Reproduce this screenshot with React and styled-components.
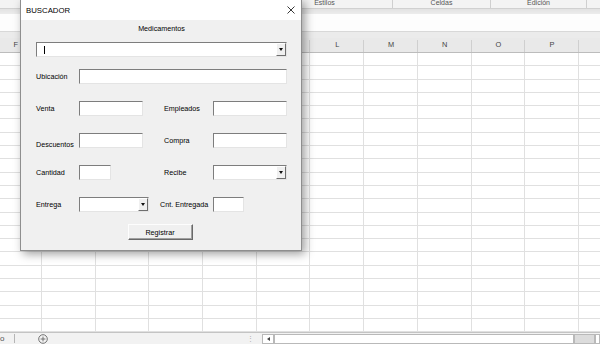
import React from "react";
import styled, { createGlobalStyle } from "styled-components";

const GlobalStyle = createGlobalStyle`
  body {
    margin: 0;
    overflow: hidden;
    font-family: "Liberation Sans", Arial, sans-serif;
  }
`;

const COLS = ["F", "G", "H", "I", "J", "K", "L", "M", "N", "O", "P", ""];
const GRID_COLS = "42px repeat(11, 53.7px)";

const Screen = styled.div`
  position: relative;
  width: 600px;
  height: 344px;
  overflow: hidden;
  background: #fff;
  display: flex;
  flex-direction: column;
`;

const RibbonLabels = styled.div`
  display: flex;
  height: 8px;
  background: #f3f3f3;
`;

const RibbonGroup = styled.div`
  width: ${(p) => p.$w}px;
  flex: none;
  border-right: 1px solid #cfcfcf;
  font-size: 7px;
  line-height: 6px;
  color: #555;
  text-align: center;
  overflow: hidden;
`;

const RibbonBand = styled.div`
  height: 6px;
  border-top: 1px solid #d0d0d0;
  box-sizing: border-box;
  background: linear-gradient(#e2e2e2, #ececec);
`;

const FormulaBar = styled.div`
  height: 18px;
  background: #fdfdfd;
  box-sizing: border-box;
  border-bottom: 1px solid #d8d8d8;
`;

const HeaderGap = styled.div`
  height: 6px;
  background: #ebebeb;
`;

const HeaderRow = styled.div`
  display: grid;
  grid-template-columns: ${GRID_COLS};
  height: 15px;
  box-sizing: border-box;
  background: #e9e9e9;
  border-bottom: 1px solid #bcbcbc;
`;

const HeaderCell = styled.div`
  position: relative;
  font-size: 7.4px;
  line-height: 14px;
  color: #444;
  text-align: ${(p) => (p.$first ? "right" : "center")};
  padding-right: ${(p) => (p.$first ? 24 : 0)}px;
  &::after {
    content: "";
    position: absolute;
    right: 0;
    top: 2px;
    bottom: 0;
    width: 1px;
    background: #cfcfcf;
  }
`;

const SheetGrid = styled.div`
  flex: 1;
  display: grid;
  grid-template-columns: ${GRID_COLS};
  grid-auto-rows: 13.3px;
  overflow: hidden;
`;

const Cell = styled.div`
  box-sizing: border-box;
  border-right: 1px solid #e0e0e0;
  border-bottom: 1px solid #e0e0e0;
`;

const BottomBar = styled.div`
  height: 12px;
  flex: none;
  box-sizing: border-box;
  border-top: 1px solid #c4c4c4;
  background: #f2f2f2;
  display: flex;
  align-items: center;
  font-size: 8px;
  color: #555;
`;

const TabEnd = styled.span`
  width: 14px;
  line-height: 10px;
`;

const TabSep = styled.span`
  width: 1px;
  height: 9px;
  background: #b5b5b5;
  margin-right: 23px;
`;

const Dots = styled.span`
  margin-left: auto;
  margin-right: 8px;
  color: #aaa;
  font-size: 7px;
`;

const ScrollBox = styled.div`
  width: ${(p) => p.$w}px;
  height: 10px;
  box-sizing: border-box;
  border: 1px solid #b9b9b9;
  background: ${(p) => p.$bg || "#fff"};
  display: flex;
  align-items: center;
  justify-content: center;
  flex: none;
`;

const ArrowLeft = styled.span`
  width: 0;
  height: 0;
  border-top: 2.5px solid transparent;
  border-bottom: 2.5px solid transparent;
  border-right: 3px solid #444;
`;

/* dialog */

const Dialog = styled.div`
  position: absolute;
  left: 20px;
  top: -1px;
  width: 282px;
  box-sizing: border-box;
  border: 1px solid #8e8e8e;
  background: #f0f0f0;
  box-shadow: 3px 3px 9px rgba(0, 0, 0, 0.38);
`;

const TitleBar = styled.div`
  height: 20px;
  background: #fff;
  display: flex;
  align-items: center;
  justify-content: space-between;
  padding: 0 6px 0 5px;
  box-sizing: border-box;
`;

const Title = styled.span`
  font-size: 7.8px;
  color: #000;
`;

const Body = styled.div`
  padding: 4px 0 10px 15px;
  display: flex;
  flex-direction: column;
`;

const Caption = styled.div`
  height: 10px;
  line-height: 10px;
  width: 251px;
  text-align: center;
  font-size: 7.2px;
  color: #000;
`;

const FormRow = styled.div`
  display: grid;
  grid-template-columns: ${(p) => p.$cols || "43px 85px 49px 74px"};
  height: 15px;
  margin-top: ${(p) => p.$top}px;
`;

const Label = styled.span`
  align-self: center;
  font-size: 7.2px;
  color: #000;
  white-space: nowrap;
  margin-left: ${(p) => p.$shift || 0}px;
  transform: translateY(${(p) => p.$drop || 0}px);
`;

const TextBox = styled.div`
  width: ${(p) => (p.$w ? `${p.$w}px` : "100%")};
  height: 15px;
  box-sizing: border-box;
  background: #fff;
  border: 1px solid;
  border-color: #7d7d7d #e4e4e4 #e4e4e4 #7d7d7d;
  display: flex;
  align-items: stretch;
  justify-content: flex-end;
  position: relative;
`;

const Caret = styled.span`
  position: absolute;
  left: 7px;
  top: 3px;
  width: 1px;
  height: 8px;
  background: #000;
`;

const DropBtn = styled.div`
  width: 10px;
  box-sizing: border-box;
  background: #f0f0f0;
  border: 1px solid;
  border-color: #fff #6e6e6e #6e6e6e #fff;
  display: flex;
  align-items: center;
  justify-content: center;
`;

const DownTri = styled.span`
  width: 0;
  height: 0;
  border-left: 2.5px solid transparent;
  border-right: 2.5px solid transparent;
  border-top: 3px solid #111;
`;

const ButtonRow = styled.div`
  margin-top: 12px;
  width: 251px;
  display: flex;
  justify-content: center;
`;

const Button = styled.div`
  width: 65px;
  height: 16px;
  box-sizing: border-box;
  border: 1px solid;
  border-color: #fdfdfd #696969 #696969 #fdfdfd;
  box-shadow: inset -1px -1px 0 #a0a0a0;
  background: #f0f0f0;
  font-size: 7.2px;
  color: #000;
  display: flex;
  align-items: center;
  justify-content: center;
  margin-left: -3px;
`;

const Combo = ({ w, caret }) => (
  <TextBox $w={w}>
    {caret && <Caret />}
    <DropBtn>
      <DownTri />
    </DropBtn>
  </TextBox>
);

export default function App() {
  return (
    <>
      <GlobalStyle />
      <Screen>
        <RibbonLabels>
          <RibbonGroup $w={256} />
          <RibbonGroup $w={135}>Estilos</RibbonGroup>
          <RibbonGroup $w={97}>Celdas</RibbonGroup>
          <RibbonGroup $w={95}>Edición</RibbonGroup>
        </RibbonLabels>
        <RibbonBand />
        <FormulaBar />
        <HeaderGap />
        <HeaderRow>
          {COLS.map((c, i) => (
            <HeaderCell key={i} $first={i === 0}>
              {c}
            </HeaderCell>
          ))}
        </HeaderRow>
        <SheetGrid>
          {Array.from({ length: 22 * COLS.length }).map((_, i) => (
            <Cell key={i} />
          ))}
        </SheetGrid>
        <BottomBar>
          <TabEnd>o</TabEnd>
          <TabSep />
          <svg width="10" height="10" viewBox="0 0 10 10">
            <circle cx="5" cy="5" r="4.3" fill="none" stroke="#666" strokeWidth="0.9" />
            <path d="M5 2.6v4.8M2.6 5h4.8" stroke="#666" strokeWidth="0.9" />
          </svg>
          <Dots>⋮</Dots>
          <ScrollBox $w={12}>
            <ArrowLeft />
          </ScrollBox>
          <ScrollBox $w={300} />
          <ScrollBox $w={21} $bg="#dcdcdc" />
          <ScrollBox $w={5} />
        </BottomBar>

        <Dialog>
          <TitleBar>
            <Title>BUSCADOR</Title>
            <svg width="8" height="8" viewBox="0 0 8 8">
              <path d="M0.5 0.5L7.5 7.5M7.5 0.5L0.5 7.5" stroke="#222" strokeWidth="0.9" />
            </svg>
          </TitleBar>
          <Body>
            <Caption>Medicamentos</Caption>
            <FormRow $top={8} $cols="251px">
              <Combo caret />
            </FormRow>
            <FormRow $top={12} $cols="43px 208px">
              <Label>Ubicación</Label>
              <TextBox />
            </FormRow>
            <FormRow $top={17}>
              <Label>Venta</Label>
              <TextBox $w={64} />
              <Label>Empleados</Label>
              <TextBox />
            </FormRow>
            <FormRow $top={17}>
              <Label $drop={4}>Descuentos</Label>
              <TextBox $w={64} />
              <Label>Compra</Label>
              <TextBox />
            </FormRow>
            <FormRow $top={17}>
              <Label>Cantidad</Label>
              <TextBox $w={32} />
              <Label>Recibe</Label>
              <Combo />
            </FormRow>
            <FormRow $top={17}>
              <Label>Entrega</Label>
              <Combo w={70} />
              <Label $shift={-4}>Cnt. Entregada</Label>
              <TextBox $w={31} />
            </FormRow>
            <ButtonRow>
              <Button>Registrar</Button>
            </ButtonRow>
          </Body>
        </Dialog>
      </Screen>
    </>
  );
}
